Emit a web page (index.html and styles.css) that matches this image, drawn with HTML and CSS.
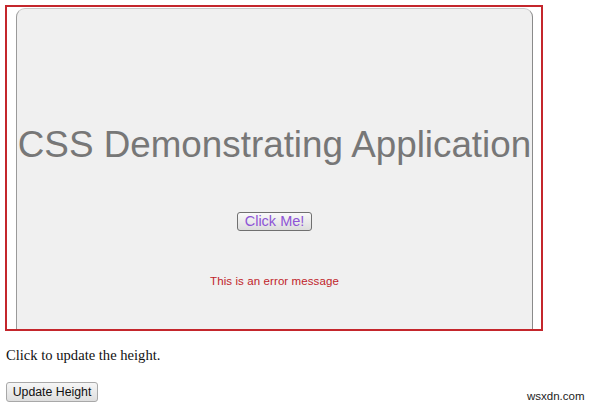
FILE: index.html
```html
<!DOCTYPE html>
<html>
<head>
<meta charset="utf-8">
<link rel="stylesheet" href="styles.css">
</head>
<body>
<div class="frame">
  <div class="panel">
    <h1 class="title">CSS Demonstrating Application</h1>
    <button class="click-btn">Click Me!</button>
    <p class="error">This is an error message</p>
  </div>
</div>
<p class="hint">Click to update the height.</p>
<button class="update-btn">Update Height</button>
<span class="watermark">wsxdn.com</span>
</body>
</html>
```
FILE: styles.css
```css
html, body {
  margin: 0;
  padding: 0;
  background: #ffffff;
}
body {
  padding: 5px 0 0 5px;
  position: relative;
  width: 595px;
  height: 403px;
  font-family: "Liberation Serif", "Times New Roman", serif;
}
.frame {
  box-sizing: border-box;
  width: 538px;
  height: 326px;
  border: 2px solid #c4262c;
  padding: 1px 8px 0 9px;
  overflow: hidden;
}
.panel {
  box-sizing: border-box;
  height: 360px;
  background: #f0f0f0;
  border: 1px solid #c8c8c8;
  border-left-color: #9a9a9a;
  border-right-color: #8a8a8a;
  border-radius: 9px 9px 0 0;
  padding-top: 115px;
  text-align: center;
  font-family: "Liberation Sans", Arial, sans-serif;
}
.title {
  margin: 0;
  font-weight: normal;
  font-size: 36.8px;
  line-height: 42px;
  color: #777777;
  white-space: nowrap;
}
.click-btn {
  display: inline-block;
  margin-top: 46px;
  width: 75px;
  height: 19px;
  padding: 0;
  font-family: "Liberation Sans", Arial, sans-serif;
  font-size: 14.5px;
  line-height: 17px;
  color: #8e55d6;
  background: linear-gradient(#fafafa, #dcdcdc);
  border: 1px solid #707070;
  border-radius: 3px;
}
.error {
  margin: 43px 0 0 0;
  font-size: 11.5px;
  line-height: 14px;
  letter-spacing: 0.1px;
  color: #c0242a;
}
.hint {
  margin: 16px 0 0 1px;
  font-size: 14.6px;
  line-height: 17px;
  color: #111111;
}
.update-btn {
  display: block;
  margin: 18px 0 0 1px;
  width: 92px;
  height: 20px;
  padding: 0;
  font-family: "Liberation Sans", Arial, sans-serif;
  font-size: 12.3px;
  color: #111111;
  background: linear-gradient(#f6f6f6, #dedede);
  border: 1px solid #a8a8a8;
  border-radius: 3px;
}
.watermark {
  position: absolute;
  left: 527px;
  top: 390px;
  font-family: "Liberation Sans", Arial, sans-serif;
  font-size: 11.5px;
  color: #222222;
}
```
